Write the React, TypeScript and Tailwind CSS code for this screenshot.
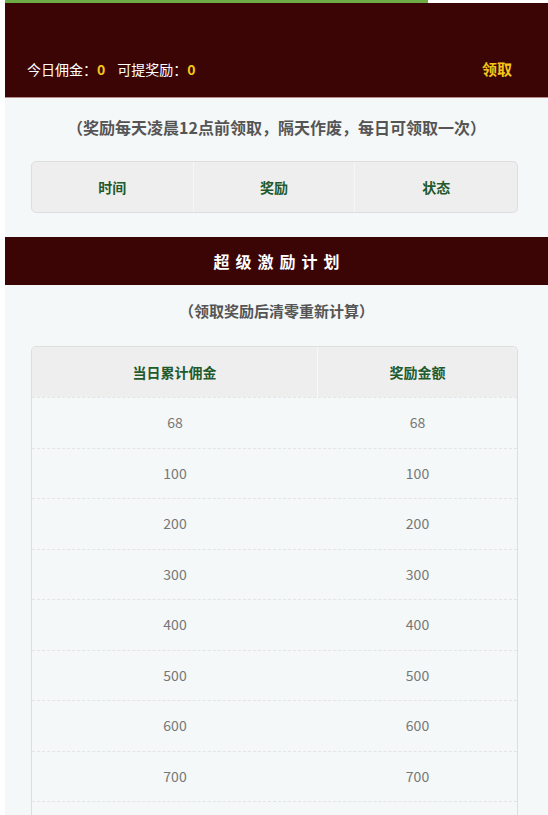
import React from "react";

const rows = [68, 100, 200, 300, 400, 500, 600, 700];

export default function App() {
  const font = { fontFamily: '"Noto Sans CJK SC", "Noto Sans", sans-serif' };
  return (
    <div className="min-h-[815px] bg-white pl-[5px]" style={font}>
      <div className="min-h-[815px] bg-[#f4f8f8]">
        <div className="h-[3px] bg-white">
          <div className="h-full w-[423px] bg-[#6cae45]" />
        </div>
        <div className="flex h-[95px] items-end justify-between border-b border-[#b98a8a] bg-[#3c0505] pb-[17px] pl-[22px] pr-[36px]">
          <div className="flex items-center text-[14px] text-white">
            <span>今日佣金：</span>
            <span className="font-bold text-[#f5c518]">0</span>
            <span className="ml-[12px]">可提奖励：</span>
            <span className="font-bold text-[#f5c518]">0</span>
          </div>
          <div className="text-[15px] font-bold text-[#f5c518]">领取</div>
        </div>

        <div className="pt-[17px] text-center text-[16px] font-bold leading-[24px] text-[#555]">
          （奖励每天凌晨12点前领取，隔天作废，每日可领取一次）
        </div>

        <div className="ml-[26px] mr-[30px] mt-[22px] grid h-[52px] grid-cols-3 overflow-hidden rounded-[5px] border border-[#dedede] bg-[#eeeeee]">
          {["时间", "奖励", "状态"].map((t, i) => (
            <div
              key={t}
              className={`flex items-center justify-center text-[14px] font-bold text-[#1f5a2c] ${i < 2 ? "border-r border-[#f6f6f6]" : ""}`}
            >
              {t}
            </div>
          ))}
        </div>

        <div className="mt-[24px] flex h-[48px] items-center justify-center bg-[#3c0505] text-[16px] font-bold tracking-[6px] text-white">
          <span className="pl-[6px]">超级激励计划</span>
        </div>

        <div className="pt-[14px] text-center text-[15px] font-bold leading-[24px] text-[#555]">
          （领取奖励后清零重新计算）
        </div>

        <div className="ml-[26px] mr-[30px] mt-[23px] overflow-hidden rounded-t-[5px] border-x border-t border-[#dedede]">
          <div className="grid h-[50px] grid-cols-[286px_1fr] bg-[#eeeeee]">
            <div className="flex items-center justify-center border-r border-[#f8f8f8] text-[14px] font-bold text-[#1f5a2c]">
              当日累计佣金
            </div>
            <div className="flex items-center justify-center text-[14px] font-bold text-[#1f5a2c]">
              奖励金额
            </div>
          </div>
          {rows.map((r) => (
            <div
              key={r}
              className="grid h-[50.5px] grid-cols-[286px_1fr] border-t border-dashed border-[#e4e4e4] text-[14px] text-[#777]"
            >
              <div className="flex items-center justify-center">{r}</div>
              <div className="flex items-center justify-center">{r}</div>
            </div>
          ))}
          <div className="h-[50px] border-t border-dashed border-[#e4e4e4]" />
        </div>
      </div>
    </div>
  );
}
